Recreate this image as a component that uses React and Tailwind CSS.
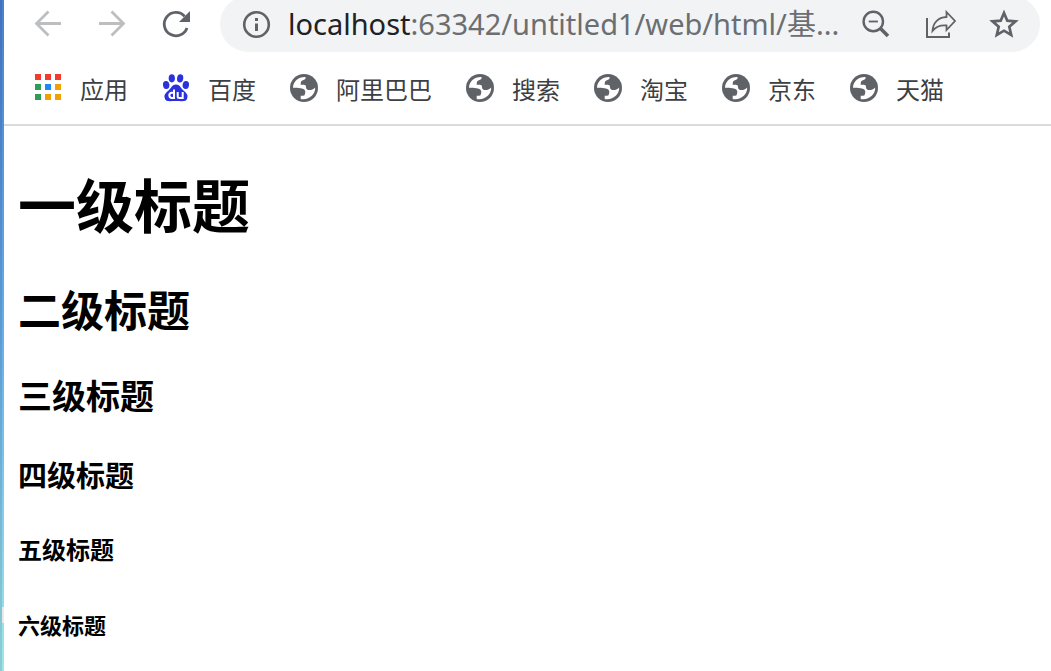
import React from "react";

const bookmarks = ["阿里巴巴", "搜索", "淘宝", "京东", "天猫"];

function Svg({ className = "", children }) {
  return (
    <svg viewBox="0 0 32 32" className={"h-8 w-8 shrink-0 " + className} aria-hidden="true">
      {children}
    </svg>
  );
}

function Back() {
  return (
    <Svg className="text-[#bdbebf]">
      <path d="M29 15.500H4.500M16.500 3.500 4.500 15.500 16.500 27.500" fill="none" stroke="currentColor" strokeWidth="2.800" />
    </Svg>
  );
}

function Forward() {
  return (
    <Svg className="text-[#bdbebf]">
      <path d="M3 15.500H27.500M15.500 3.500 27.500 15.500 15.500 27.500" fill="none" stroke="currentColor" strokeWidth="2.800" />
    </Svg>
  );
}

function Reload() {
  return (
    <Svg className="text-[#5f6368]">
      <path d="M27 20A11.700 11.700 0 1 1 24.600 8.200" fill="none" stroke="currentColor" strokeWidth="2.800" />
      <path d="M30 3V14H19Z" fill="currentColor" />
    </Svg>
  );
}

function Info() {
  return (
    <Svg className="text-[#5f6368]">
      <circle cx="16.500" cy="16.500" r="12.300" fill="none" stroke="currentColor" strokeWidth="2.600" />
      <path d="M15 10h3v3h-3zM15 15.500h3v7.500h-3z" fill="currentColor" />
    </Svg>
  );
}

function ZoomOut() {
  return (
    <Svg className="text-[#5f6368]">
      <circle cx="13.300" cy="13.500" r="9.700" fill="none" stroke="currentColor" strokeWidth="2.400" />
      <path d="M8.700 13.500h9.200" stroke="currentColor" strokeWidth="1.800" />
      <path d="M20 20 28 28" stroke="currentColor" strokeWidth="3.600" />
    </Svg>
  );
}

function Share() {
  return (
    <Svg className="text-[#5f6368]">
      <path d="M3 10V29H25V24.500" fill="none" stroke="currentColor" strokeWidth="2" />
      <path d="M22.500 4 31 13 22.500 22V17.500C16.500 17 12 18.500 8.500 23 9 15.500 13.500 9.500 22.500 9Z" fill="none" stroke="currentColor" strokeWidth="1.800" />
    </Svg>
  );
}

function Star() {
  return (
    <Svg className="text-[#5f6368]">
      <path d="M16 5 19.300 12.700 27.500 13.300 21.300 18.800 23.200 27 16 22.700 8.800 27 10.700 18.800 4.500 13.300 12.700 12.700Z" fill="none" stroke="currentColor" strokeWidth="2.700" />
    </Svg>
  );
}

function Apps() {
  const cells = [
    [3, 2, "#f4392f"], [13, 2, "#f4392f"], [23, 2, "#f4392f"],
    [3, 12, "#2f9e55"], [13, 12, "#1e88f7"], [23, 12, "#f0a000"],
    [3, 22, "#2f9e55"], [13, 22, "#f0a000"], [23, 22, "#f0a000"],
  ];
  return (
    <Svg>
      {cells.map(([x, y, fill]) => (
        <rect key={x + "-" + y} x={x} y={y} width="6" height="6" fill={fill} />
      ))}
    </Svg>
  );
}

function Baidu() {
  return (
    <Svg>
      <g fill="#2a32e0">
        <ellipse cx="6.200" cy="13" rx="3.200" ry="4" transform="rotate(-8 6 13)" />
        <ellipse cx="11.800" cy="6.300" rx="3.100" ry="4.100" />
        <ellipse cx="20.200" cy="6.300" rx="3.100" ry="4.100" transform="rotate(8 20 6)" />
        <ellipse cx="25.800" cy="13" rx="3.200" ry="4" transform="rotate(8 26 13)" />
        <path d="M16 12.500C20 12.500 20.500 16 23.500 18.500 27 21.500 28 23 27.300 26 26.500 30.500 21 29 16 29S5.500 30.500 4.700 26C4 23 5 21.500 8.500 18.500 11.500 16 12 12.500 16 12.500Z" />
      </g>
      <path d="M14 17.500V26H11.500A2.700 2.700 0 0 1 11.500 20.700H14M17.700 20V24.500Q17.700 26 19.300 26H22.700V20" fill="none" stroke="#fff" strokeWidth="2" />
    </Svg>
  );
}

function Globe() {
  return (
    <Svg className="text-[#5f6368]">
      <circle cx="16" cy="16" r="14" fill="currentColor" />
      <path
        d="M5 15.800C5 9.500 10.500 4.700 17.500 5V6.500C16.500 8.500 13.300 8 13 10 12.700 11 12.500 12 12.700 12.800 15 12.500 17.500 12.700 18 14 18 16 18 17 19.500 17.700 22 18.500 24.500 18 27.200 15.500 27.500 22.500 20.500 28.500 12.700 26.900V23.800C15 24 16.500 23.800 16.800 22.500 17.500 20.500 17.500 19 16.500 17.800 15 16.300 11 16 5 15.800Z"
        fill="#fff"
      />
    </Svg>
  );
}

function Bookmark({ icon, label }) {
  return (
    <a href="#" className="flex shrink-0 items-center gap-4">
      {icon}
      <span className="pt-0.5">{label}</span>
    </a>
  );
}

export default function App() {
  return (
    <div className="flex min-h-screen bg-white font-['Noto_Sans','Noto_Sans_CJK_SC',sans-serif]">
      <div className="flex w-1 shrink-0 flex-col border-l-2 border-black/10 bg-linear-to-b from-[#4a7fd0] via-[#68aeea] to-[#9fe6ea]">
        <div className="flex-1" />
        <div className="mb-12 h-4 bg-[#e6eaec]" />
      </div>
      <div className="min-w-0 flex-1">
        <header className="border-b-2 border-[#dadbdc]">
          <div className="-mt-1 flex h-14 items-center pr-[11px] pl-7">
            <nav className="flex shrink-0 gap-8 pr-7">
              <button type="button" aria-label="后退"><Back /></button>
              <button type="button" aria-label="前进"><Forward /></button>
              <button type="button" aria-label="重新加载"><Reload /></button>
            </nav>
            <div className="flex h-14 min-w-0 flex-1 items-center rounded-full bg-[#f1f3f4] px-5">
              <button type="button" aria-label="网站信息"><Info /></button>
              <div className="ml-4 min-w-0 flex-1 truncate text-[29px] leading-10 text-[#6b6e72]">
                <span className="text-[#202124]">localhost</span>:63342/untitled1/web/html/基...
              </div>
              <div className="flex shrink-0 gap-8 pl-3">
                <button type="button" aria-label="缩小"><ZoomOut /></button>
                <button type="button" aria-label="分享"><Share /></button>
                <button type="button" aria-label="收藏"><Star /></button>
              </div>
            </div>
          </div>
          <nav className="flex h-[72px] items-center gap-8 pl-7 font-['Noto_Sans_CJK_SC',sans-serif] text-2xl text-[#3c4043]">
            <Bookmark icon={<Apps />} label="应用" />
            <Bookmark icon={<Baidu />} label="百度" />
            {bookmarks.map((label) => (
              <Bookmark key={label} icon={<Globe />} label={label} />
            ))}
          </nav>
        </header>
        <main className="flex flex-col px-[14px] pt-[39px] font-['Noto_Sans_CJK_SC',sans-serif] font-bold text-black">
          <h1 className="text-[58px] leading-[76px]">一级标题</h1>
          <h2 className="mt-[38px] text-[43px] leading-[58px]">二级标题</h2>
          <h3 className="mt-9 text-[34px] leading-[44px]">三级标题</h3>
          <h4 className="mt-[38px] text-[29px] leading-[38px]">四级标题</h4>
          <h5 className="mt-10 text-[24px] leading-[32px]">五级标题</h5>
          <h6 className="mt-11 text-[22px] leading-[30px]">六级标题</h6>
        </main>
      </div>
    </div>
  );
}
